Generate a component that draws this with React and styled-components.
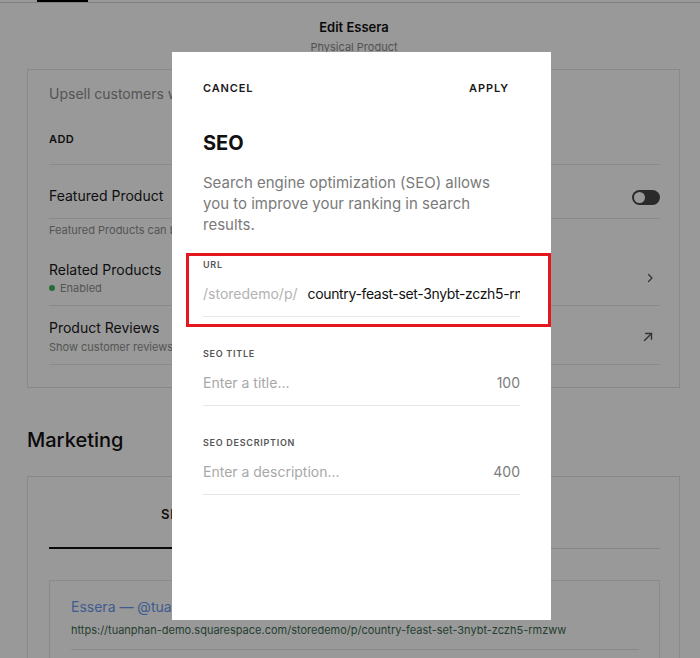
import React from "react";
import styled, { createGlobalStyle } from "styled-components";

const GlobalStyle = createGlobalStyle`
  html, body {
    margin: 0;
    padding: 0;
  }
  body {
    font-family: Inter, "Liberation Sans", sans-serif;
    background: #fff;
    color: #1a1a1a;
  }
`;

const Page = styled.div`
  position: relative;
  width: 700px;
  height: 658px;
  overflow: hidden;
  background: #fff;
`;

const TopNav = styled.div`
  height: 2px;
  border-bottom: 1px solid #d8d8d8;
  padding-left: 37px;
`;

const NavTab = styled.div`
  width: 51px;
  height: 2px;
  background: #000;
`;

const Header = styled.header`
  display: flex;
  flex-direction: column;
  align-items: center;
  padding: 15px 0 0 8px;
  height: 52px;
  box-sizing: border-box;
`;

const HeaderTitle = styled.div`
  font-size: 13px;
  line-height: 18px;
  font-weight: 600;
  color: #111;
`;

const HeaderSub = styled.div`
  font-size: 11px;
  line-height: 16px;
  color: #8a8a8a;
  margin-top: 3px;
`;

const Content = styled.main`
  padding: 14px 20px 0 27px;
`;

const Card = styled.section`
  border: 1px solid #e4e4e4;
  padding: ${(p) => p.$pad || "14px 19px 22px 21px"};
`;

const Muted = styled.div`
  font-size: 14px;
  line-height: 20px;
  color: #8e8e8e;
  white-space: nowrap;
`;

const SmallCaps = styled.div`
  font-size: 11px;
  line-height: 16px;
  font-weight: 600;
  letter-spacing: 0.04em;
  color: #1a1a1a;
  margin-top: 27px;
  padding-bottom: 17px;
  border-bottom: 1px solid #e6e6e6;
`;

const Row = styled.div`
  display: flex;
  align-items: center;
  justify-content: space-between;
  padding: ${(p) => p.$pad};
  border-bottom: ${(p) => (p.$line ? "1px solid #e6e6e6" : "none")};
`;

const RowTitle = styled.div`
  font-size: 14px;
  line-height: 20px;
  color: #1a1a1a;
`;

const RowNote = styled.div`
  font-size: 11px;
  line-height: 16px;
  color: #8e8e8e;
  display: flex;
  align-items: center;
  gap: 5px;
  white-space: nowrap;
  padding-top: ${(p) => p.$pt || 0}px;
`;

const Dot = styled.span`
  width: 6px;
  height: 6px;
  border-radius: 50%;
  background: #3fb55a;
`;

const Toggle = styled.div`
  width: 28px;
  height: 15px;
  border-radius: 8px;
  background: #474747;
  display: flex;
  align-items: center;
  padding-left: 2px;
  box-sizing: border-box;
  margin-top: 3px;
  &::before {
    content: "";
    width: 11px;
    height: 11px;
    border-radius: 50%;
    background: #fff;
  }
`;

const IconBox = styled.div`
  display: flex;
  color: #555;
  margin-right: ${(p) => p.$mr || 0}px;
`;

const SectionTitle = styled.h2`
  margin: 38px 0 22px;
  font-size: 20px;
  line-height: 28px;
  font-weight: 500;
  color: #111;
`;

const Tabs = styled.div`
  display: flex;
  border-bottom: 1px solid #e0e0e0;
`;

const Tab = styled.div`
  flex: ${(p) => (p.$w ? `0 0 ${p.$w}px` : "1")};
  text-align: center;
  font-size: 13px;
  line-height: 18px;
  font-weight: 600;
  letter-spacing: 0.06em;
  color: #1a1a1a;
  padding-bottom: 24px;
  margin-bottom: -1px;
  border-bottom: 2px solid ${(p) => (p.$active ? "#111" : "transparent")};
`;

const Preview = styled.div`
  margin-top: 31px;
  border: 1px solid #e6e6e6;
  padding: 16px 20px 0 21px;
  height: 90px;
`;

const PreviewLink = styled.div`
  font-size: 14px;
  line-height: 20px;
  color: #6a9af0;
`;

const PreviewUrl = styled.div`
  font-size: 11px;
  line-height: 16px;
  color: #3d6b52;
  margin-top: 5px;
  padding-bottom: 11px;
  border-bottom: 1px solid #e6e6e6;
  white-space: nowrap;
`;

const Overlay = styled.div`
  position: absolute;
  inset: 0;
  background: rgba(0, 0, 0, 0.4);
  padding: 52px 0 0 172px;
  box-sizing: border-box;
`;

const Modal = styled.div`
  width: 379px;
  height: 568px;
  background: #fff;
  padding: 28px 31px 0;
  box-sizing: border-box;
`;

const ModalBar = styled.div`
  display: flex;
  justify-content: space-between;
`;

const TextButton = styled.button`
  border: none;
  background: none;
  padding: 0 ${(p) => (p.$right ? 11 : 0)}px 0 0;
  font-family: inherit;
  font-size: 11px;
  line-height: 16px;
  font-weight: 600;
  letter-spacing: 0.08em;
  color: #1a1a1a;
  cursor: pointer;
`;

const ModalTitle = styled.h1`
  margin: 34px 0 0;
  font-size: 20px;
  line-height: 26px;
  font-weight: 700;
  color: #111;
`;

const ModalText = styled.p`
  margin: 16px 0 0;
  font-size: 15px;
  line-height: 21px;
  color: #7a7a7a;
  padding-right: 20px;
`;

const Field = styled.div`
  position: relative;
  margin-top: ${(p) => p.$mt}px;
  padding-bottom: 12px;
  border-bottom: 1px solid #e8e8e8;

  ${(p) =>
    p.$marked &&
    `
    &::after {
      content: "";
      position: absolute;
      inset: -5px -31px -11px -17px;
      border: 3px solid #e4161e;
      pointer-events: none;
    }
  `}
`;

const Label = styled.div`
  font-size: 9px;
  line-height: 14px;
  font-weight: 600;
  letter-spacing: 0.08em;
  color: #555;
`;

const InputRow = styled.div`
  display: flex;
  align-items: center;
  margin-top: 12px;
  font-size: 14px;
  line-height: 20px;
  overflow: hidden;
  white-space: nowrap;
`;

const Prefix = styled.span`
  color: #b2b2b2;
  margin-right: 10px;
`;

const Value = styled.span`
  color: #111;
  letter-spacing: -0.35px;
`;

const Placeholder = styled.span`
  flex: 1;
  color: #a8a8a8;
`;

const Counter = styled.span`
  color: #7c7c7c;
`;

const Chevron = () => (
  <svg width="12" height="12" viewBox="0 0 24 24" fill="none" stroke="currentColor" strokeWidth="2.4" strokeLinecap="round" strokeLinejoin="round">
    <path d="M9 5l7 7-7 7" />
  </svg>
);

const ArrowOut = () => (
  <svg width="14" height="14" viewBox="0 0 24 24" fill="none" stroke="currentColor" strokeWidth="2.4" strokeLinecap="round" strokeLinejoin="round">
    <path d="M6 18L18 6" />
    <path d="M8 6h10v10" />
  </svg>
);

const fields = [
  { label: "SEO TITLE", placeholder: "Enter a title...", limit: 100 },
  { label: "SEO DESCRIPTION", placeholder: "Enter a description...", limit: 400 },
];

export default function App() {
  return (
    <>
      <GlobalStyle />
      <Page>
        <TopNav>
          <NavTab />
        </TopNav>
        <Header>
          <HeaderTitle>Edit Essera</HeaderTitle>
          <HeaderSub>Physical Product</HeaderSub>
        </Header>
        <Content>
          <Card>
            <Muted>Upsell customers with related products in your store.</Muted>
            <SmallCaps>ADD</SmallCaps>
            <Row $pad="21px 0 12px" $line>
              <RowTitle>Featured Product</RowTitle>
              <Toggle />
            </Row>
            <RowNote $pt={3}>Featured Products can be displayed on your site.</RowNote>
            <Row $pad="22px 0 9px" $line>
              <div>
                <RowTitle>Related Products</RowTitle>
                <RowNote>
                  <Dot />
                  Enabled
                </RowNote>
              </div>
              <IconBox $mr={4}>
                <Chevron />
              </IconBox>
            </Row>
            <Row $pad="12px 0 9px" $line>
              <div>
                <RowTitle>Product Reviews</RowTitle>
                <RowNote $pt={1}>Show customer reviews on this product.</RowNote>
              </div>
              <IconBox $mr={5}>
                <ArrowOut />
              </IconBox>
            </Row>
          </Card>

          <SectionTitle>Marketing</SectionTitle>
          <Card $pad="28px 19px 20px 21px">
            <Tabs>
              <Tab $active $w={282}>SEARCH</Tab>
              <Tab>SOCIAL</Tab>
            </Tabs>
            <Preview>
              <PreviewLink>Essera — @tuanphan-demo</PreviewLink>
              <PreviewUrl>
                https://tuanphan-demo.squarespace.com/storedemo/p/country-feast-set-3nybt-zczh5-rmzww
              </PreviewUrl>
            </Preview>
          </Card>
        </Content>

        <Overlay>
          <Modal>
            <ModalBar>
              <TextButton>CANCEL</TextButton>
              <TextButton $right>APPLY</TextButton>
            </ModalBar>
            <ModalTitle>SEO</ModalTitle>
            <ModalText>
              Search engine optimization (SEO) allows you to improve your ranking in search results.
            </ModalText>
            <Field $mt={23} $marked>
              <Label>URL</Label>
              <InputRow>
                <Prefix>/storedemo/p/</Prefix>
                <Value>country-feast-set-3nybt-zczh5-rmzww</Value>
              </InputRow>
            </Field>
            {fields.map((f) => (
              <Field key={f.label} $mt={30}>
                <Label>{f.label}</Label>
                <InputRow>
                  <Placeholder>{f.placeholder}</Placeholder>
                  <Counter>{f.limit}</Counter>
                </InputRow>
              </Field>
            ))}
          </Modal>
        </Overlay>
      </Page>
    </>
  );
}
